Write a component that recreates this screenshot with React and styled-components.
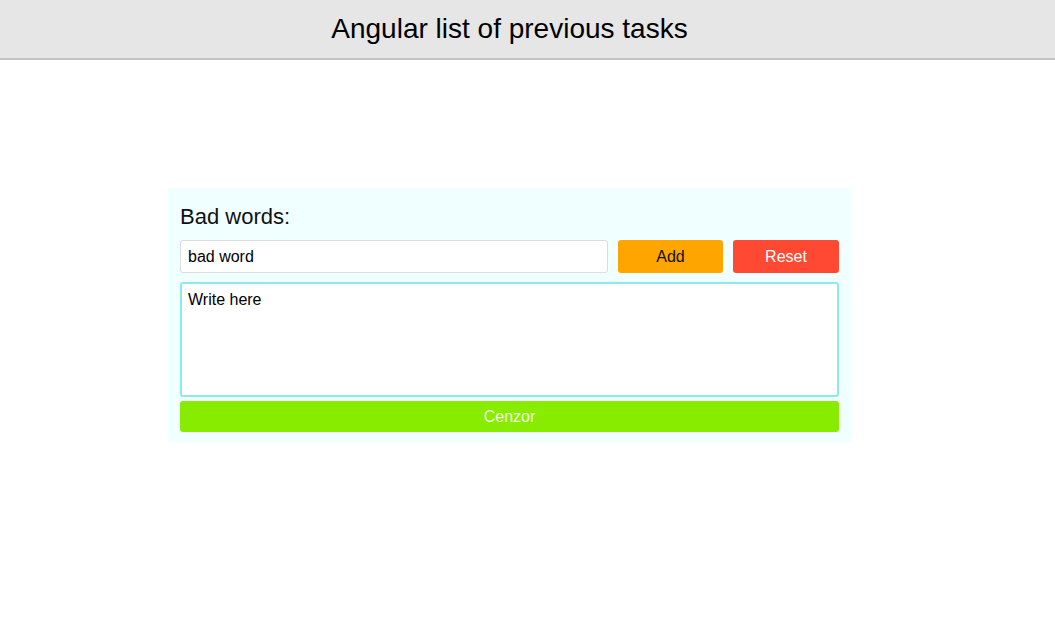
import React, { useState } from "react";
import styled, { createGlobalStyle } from "styled-components";

const GlobalStyle = createGlobalStyle`
    html, body {
        margin: 0;
        padding: 0;
        background: #ffffff;
        font-family: "Liberation Sans", Arial, sans-serif;
    }
    * {
        box-sizing: border-box;
    }
`;

const HeaderWrap = styled.div`
    width: 100%;
    background-color: #e6e6e6;
    border-bottom: 2px solid #c4c4c4;
`;

const HeaderInner = styled.div`
    width: 1019px;
    height: 58px;
    display: flex;
    justify-content: center;
    align-items: center;
`;

const Title = styled.h1`
    margin: 0;
    font-size: 28px;
    font-weight: normal;
    color: #000;
`;

const Main = styled.main`
    width: 1019px;
    display: flex;
    justify-content: center;
    padding-top: 128px;
`;

const Card = styled.section`
    width: 683px;
    display: flex;
    flex-direction: column;
    gap: 4px;
    padding: 16px 12px 11px 12px;
    background-color: #f0ffff;
    border-radius: 3px;
`;

const Label = styled.h2`
    margin: 0 0 7px 0;
    font-size: 22px;
    font-weight: normal;
    color: #111;
    line-height: 25px;
`;

const Row = styled.div`
    display: flex;
    gap: 10px;
    margin-bottom: 5px;
`;

const WordInput = styled.input`
    flex: 1;
    height: 33px;
    padding: 0 7px;
    font-family: inherit;
    font-size: 16px;
    color: #000;
    background: #fff;
    border: 1px solid #dcdcdc;
    border-radius: 3px;
    outline: none;
`;

const Button = styled.button`
    width: ${({ $w }) => $w || 105}px;
    height: 33px;
    font-family: inherit;
    font-size: 16px;
    color: ${({ $fg }) => $fg};
    background-color: ${({ $bg }) => $bg};
    border: none;
    border-radius: 3px;
    cursor: pointer;
`;

const TextArea = styled.textarea`
    display: block;
    width: 100%;
    height: 115px;
    padding: 7px 6px 6px 6px;
    font-family: inherit;
    font-size: 16px;
    color: #000;
    background: #fff;
    border: 2px solid #8de9f0;
    border-radius: 3px;
    resize: none;
    outline: none;
`;

const WideButton = styled(Button)`
    width: 100%;
    height: 31px;
`;

const App = () => {
    const [word, setWord] = useState("bad word");
    const [text, setText] = useState("Write here");

    return (
        <>
            <GlobalStyle />
            <HeaderWrap>
                <HeaderInner>
                    <Title>Angular list of previous tasks</Title>
                </HeaderInner>
            </HeaderWrap>
            <Main>
                <Card>
                    <Label>Bad words:</Label>
                    <Row>
                        <WordInput value={word} onChange={(e) => setWord(e.target.value)} />
                        <Button $bg="#ffa500" $fg="#111">Add</Button>
                        <Button $bg="#ff4933" $fg="#fff" $w={106}>Reset</Button>
                    </Row>
                    <TextArea value={text} onChange={(e) => setText(e.target.value)} />
                    <WideButton $bg="#88ec00" $fg="#f4ffe0">Cenzor</WideButton>
                </Card>
            </Main>
        </>
    );
};

export default App;
